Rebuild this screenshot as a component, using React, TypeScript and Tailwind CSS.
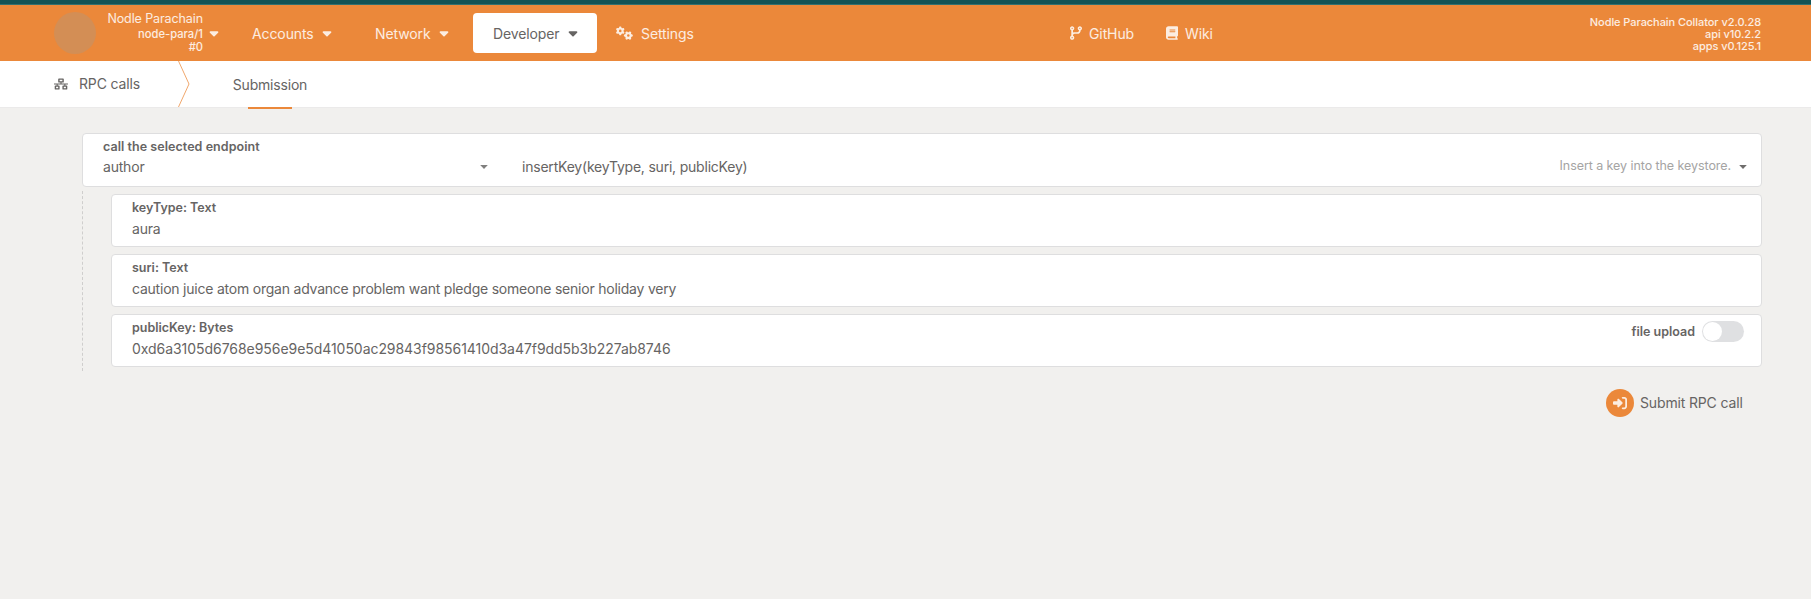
import type { ReactNode } from 'react';
import { FaBook, FaCaretDown, FaCodeBranch, FaGears, FaRightToBracket } from 'react-icons/fa6';
import { FaNetworkWired } from 'react-icons/fa';

function Header() {
  return (
    <header className="flex h-[56px] bg-[#eb883a] text-[14px] text-white/85">
      <div className="flex w-[252px] shrink-0 pl-[54px]">
        <div className="mt-[7px] size-[42px] rounded-full bg-[#d38e55]" />
        <div className="flex w-[107px] flex-col items-end pt-[6px] whitespace-nowrap">
          <div className="text-[12.5px] leading-[16px] tracking-[-0.1px]">Nodle Parachain</div>
          <div className="text-[11.2px] leading-[14px] font-medium">node-para/1</div>
          <div className="text-[11.2px] leading-[13px] font-medium">#0</div>
        </div>
        <FaCaretDown className="mt-[21px] ml-[4px] size-[14px]" />
      </div>
      <nav className="flex leading-[20px]">
        <div className="flex w-[123px] pt-[19px]">
          <span className="w-[68px] tracking-[-0.1px]">Accounts</span>
          <FaCaretDown className="mt-[2px] size-[14px]" />
        </div>
        <div className="flex w-[98px] pt-[19px]">
          <span className="w-[62px] tracking-[-0.1px]">Network</span>
          <FaCaretDown className="mt-[2px] size-[14px]" />
        </div>
        <div className="mt-[8px] flex h-[40px] w-[124px] rounded-[4px] bg-white pt-[11px] pl-[20px] text-[#666463]">
          <span className="w-[73px] tracking-[-0.12px]">Developer</span>
          <FaCaretDown className="mt-[2px] size-[14px]" />
        </div>
        <div className="flex w-[473px] pt-[19px] pl-[19px]">
          <FaGears className="mt-[2px] h-[14px] w-[17px]" />
          <span className="ml-[8px] tracking-[-0.1px]">Settings</span>
        </div>
        <div className="flex w-[96px] pt-[19px]">
          <FaCodeBranch className="mt-[2px] h-[14px] w-[12px]" />
          <span className="ml-[7px] tracking-[-0.1px]">GitHub</span>
        </div>
        <div className="flex pt-[19px]">
          <FaBook className="mt-[2px] h-[14px] w-[12px]" />
          <span className="ml-[7px] tracking-[-0.1px]">Wiki</span>
        </div>
      </nav>
      <div className="mr-[50px] ml-auto pt-[11px] text-right text-[11px] leading-[12px] font-medium tracking-[-0.06px]">
        <div>Nodle Parachain Collator v2.0.28</div>
        <div>api v10.2.2</div>
        <div>apps v0.125.1</div>
      </div>
    </header>
  );
}

function Tabs() {
  return (
    <div className="flex h-[46px] bg-white text-[14px] leading-[20px] text-[#666463]">
      <div className="flex w-[178px] pt-[13px] pl-[54px]">
        <FaNetworkWired className="mt-[4px] h-[12px] w-[14px]" />
        <span className="ml-[11px] tracking-[-0.15px]">RPC calls</span>
      </div>
      <svg className="h-[46px] w-[12px]" viewBox="0 0 12 46" fill="none" stroke="#f0a76c">
        <path d="M0.5 0L11 23L0.5 46" />
      </svg>
      <div className="ml-[42px] flex h-[48px] w-[76px] flex-col items-center pt-[14px]">
        <span className="tracking-[-0.2px]">Submission</span>
        <div className="mt-[12px] h-[2px] w-[44px] shrink-0 bg-[#eb883a]" />
      </div>
    </div>
  );
}

function SelectArrow({ className }: { className: string }) {
  return (
    <svg className={className} viewBox="0 0 8 4" fill="currentColor">
      <path d="M0.2 0H7.8L4 4Z" />
    </svg>
  );
}

type ParamProps = { label: string; value: string; valueClass: string; children?: ReactNode };

function Param({ label, value, valueClass, children }: ParamProps) {
  return (
    <div className="flex h-[53px] justify-between rounded-[4px] border border-[#dededf] bg-white pl-[20px]">
      <div>
        <div className="mt-[5px] text-[12.5px] leading-[16px] font-semibold">{label}</div>
        <div className={`mt-[3px] text-[14px] leading-[20px] ${valueClass}`}>{value}</div>
      </div>
      {children}
    </div>
  );
}

export default function App() {
  return (
    <div className="h-[599px] overflow-hidden bg-[#f1f0ee] font-['Inter',sans-serif] text-[#666463]">
      <div className="h-[5px] border-b border-[#33706f] bg-[#135355]" />
      <Header />
      <Tabs />
      <div className="h-px bg-[#ebeaea]" />
      <main className="pt-[25px] pr-[49px] pl-[82px]">
        <div className="flex h-[54px] rounded-[4px] border border-[#dededf] bg-white">
          <div className="w-[397px] pl-[20px]">
            <div className="mt-[5px] text-[12.5px] leading-[16px] font-semibold tracking-[0.05px]">call the selected endpoint</div>
            <div className="mt-[2px] text-[14px] leading-[20px] tracking-[-0.2px]">author</div>
          </div>
          <SelectArrow className="mt-[31px] h-[4px] w-[8px] text-[#807f7e]" />
          <div className="ml-[34px] pt-[23px] text-[14px] leading-[20px] tracking-[-0.21px]">insertKey(keyType, suri, publicKey)</div>
          <div className="mr-[14px] ml-auto flex">
            <div className="mr-[8px] pt-[22px] text-[12.5px] leading-[20px] tracking-[-0.07px] text-[#a5a4a4]">Insert a key into the keystore.</div>
            <SelectArrow className="mt-[31px] h-[4px] w-[8px] text-[#6f6d6c]" />
          </div>
        </div>
        <div className="mt-[4px] flex h-[180px] flex-col gap-[7px] border-l border-dashed border-[#cfcecd] pt-[3px] pl-[28px]">
          <Param label="keyType: Text" value="aura" valueClass="tracking-[-0.2px]" />
          <Param
            label="suri: Text"
            value="caution juice atom organ advance problem want pledge someone senior holiday very"
            valueClass="tracking-[-0.22px]"
          />
          <Param
            label="publicKey: Bytes"
            value="0xd6a3105d6768e956e9e5d41050ac29843f98561410d3a47f9dd5b3b227ab8746"
            valueClass="tracking-[-0.05px]"
          >
            <div className="mt-[6px] mr-[17px] flex h-[21px] items-center">
              <span className="mr-[7px] text-[12.5px] leading-[16px] font-semibold">file upload</span>
              <div className="h-[21px] w-[42px] rounded-full bg-[#dfe0e2] p-px">
                <div className="size-[19px] rounded-full bg-white" />
              </div>
            </div>
          </Param>
        </div>
        <div className="mt-[18px] flex h-[28px] items-center pl-[1524px]">
          <div className="flex size-[28px] items-center justify-center rounded-full bg-[#eb883a] text-white/85">
            <FaRightToBracket className="size-[14px]" />
          </div>
          <span className="ml-[6px] text-[14px] leading-[20px] tracking-[-0.15px]">Submit RPC call</span>
        </div>
      </main>
    </div>
  );
}
